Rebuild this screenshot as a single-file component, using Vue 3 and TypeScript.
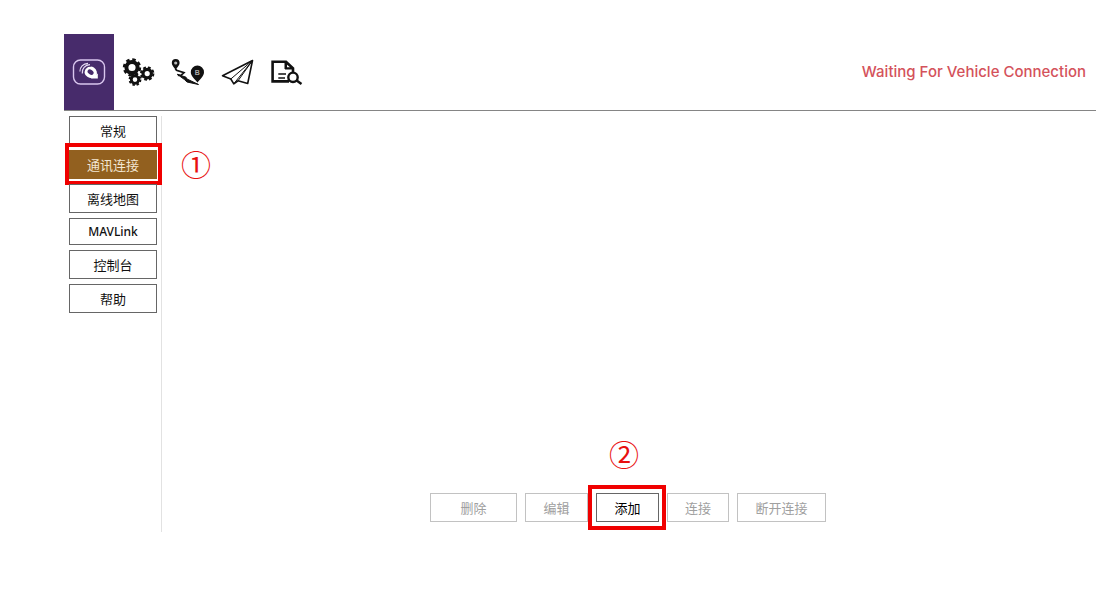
<script setup lang="ts">
import { ref } from 'vue'

interface SideItem {
  id: string
  label: string
}

interface LinkAction {
  id: string
  label: string
  enabled: boolean
}

const sideItems: SideItem[] = [
  { id: 'general', label: '常规' },
  { id: 'comm', label: '通讯连接' },
  { id: 'offline', label: '离线地图' },
  { id: 'mavlink', label: 'MAVLink' },
  { id: 'console', label: '控制台' },
  { id: 'help', label: '帮助' },
]

const actions: LinkAction[] = [
  { id: 'delete', label: '删除', enabled: false },
  { id: 'edit', label: '编辑', enabled: false },
  { id: 'add', label: '添加', enabled: true },
  { id: 'connect', label: '连接', enabled: false },
  { id: 'disconnect', label: '断开连接', enabled: false },
]

const current = ref('comm')
</script>

<template>
  <div class="page">
    <header class="toolbar">
      <nav class="tools">
        <button class="tool home" type="button" aria-label="Settings">
          <svg width="36" height="28" viewBox="0 0 36 28" fill="none">
            <rect x="2.5" y="2" width="31" height="24" rx="7" stroke="#d9c6ee" stroke-width="1.4" />
            <ellipse cx="19.6" cy="14.2" rx="5" ry="4" transform="rotate(35 19.6 14.2)" stroke="#fff" stroke-width="3.4" />
            <path d="M22 19 26.800 15.500V20.600H20Z" fill="#fff" />
            <path d="M12.800 17.500C11.800 11.500 15 8 20.500 8" stroke="#472b6b" stroke-width="1.200" />
            <path d="M11.300 15.500C10.800 10.500 14 6.900 19 6.700M8.900 13.500C8.900 9 12 5.600 17 5.400" stroke="#e6daf3" stroke-width="1.200" />
          </svg>
        </button>
        <button class="tool" type="button" aria-label="Vehicle setup">
          <svg width="37" height="30" viewBox="0 0 37 30" fill="none" stroke="#111">
            <circle cx="12" cy="10.5" r="5.6" stroke-width="4" />
            <circle cx="12" cy="10.5" r="8" stroke-width="2.400" stroke-dasharray="3.5 2.783" />
            <circle cx="27.2" cy="16.6" r="4.2" stroke-width="3.2" />
            <circle cx="27.2" cy="16.6" r="6.2" stroke-width="2" stroke-dasharray="2.8 2.069" />
            <circle cx="15" cy="22.6" r="3.7" stroke-width="2.8" />
            <circle cx="15" cy="22.6" r="5.4" stroke-width="2" stroke-dasharray="2.4 1.841" />
          </svg>
        </button>
        <button class="tool" type="button" aria-label="Plan">
          <svg width="37" height="30" viewBox="0 0 37 30" fill="none">
            <path d="M6.600 12.500C4.400 9.800 2.800 8.200 2.800 6a3.900 3.900 0 0 1 7.800 0C10.600 8.200 8.800 9.800 6.600 12.500Z" fill="#111" />
            <circle cx="6.700" cy="6" r="1.600" fill="#bbb" />
            <path d="M6.300 11.500 7.500 13.300 15 15.700 12.500 18 8.800 18.300" stroke="#111" stroke-width="1.700" />
            <path d="M8.300 17.300 17 20.200 18 22 29.500 27.500 18 25 15.500 22.600Z" fill="#111" stroke="#111" />
            <path d="M28.500 25.500C25.200 21.200 21.800 19 21.800 15.200a6.600 6.600 0 0 1 13.200 0C35 19 31.800 21.200 28.500 25.500Z" fill="#111" />
            <text class="pin-letter" x="28.400" y="18" text-anchor="middle" fill="#aaa">B</text>
          </svg>
        </button>
        <button class="tool" type="button" aria-label="Fly">
          <svg width="37" height="30" viewBox="0 0 37 30" fill="none" stroke="#111" stroke-linejoin="round">
            <path d="M34.500 3.500 4.500 18.700 12.800 22 15.800 26.800 20 23.800 29.700 26.500Z" stroke-width="1.600" />
            <path d="M34.500 3.500 12.800 22M34.500 3.500 16 26.500M34.500 3.500 20 23.800" stroke-width="1" />
          </svg>
        </button>
        <button class="tool" type="button" aria-label="Analyze">
          <svg width="37" height="30" viewBox="0 0 37 30" fill="none" stroke="#111">
            <path d="M22 24.400H5.600V4.800H19L26 11.300V16" stroke-width="2.600" />
            <path d="M18 4.500V12H26.500Z" fill="#111" stroke-width="1" />
            <path d="M20 7.800V10.300H23Z" fill="#fff" stroke="none" />
            <path d="M11.300 17H19M11.300 21H18" stroke-width="1.500" />
            <circle cx="26" cy="20.300" r="4.700" fill="#fff" stroke-width="2.400" />
            <path d="M29.300 23.300 34.500 27" stroke-width="2.400" />
          </svg>
        </button>
      </nav>
      <p class="status">Waiting For Vehicle Connection</p>
    </header>

    <div class="body">
      <nav class="side">
        <div v-for="item in sideItems" :key="item.id" class="slot">
          <button
            type="button"
            class="btn side-btn"
            :class="{ active: item.id === current, latin: item.id === 'mavlink' }"
            @click="current = item.id"
          >
            {{ item.label }}
          </button>
          <template v-if="item.id === 'comm'">
            <span class="frame side-frame"></span>
            <span class="step side-step">①</span>
          </template>
        </div>
      </nav>

      <main class="content">
        <div class="actions">
          <div v-for="a in actions" :key="a.id" class="slot">
            <button type="button" class="btn action" :class="a.id" :disabled="!a.enabled">{{ a.label }}</button>
            <template v-if="a.id === 'add'">
              <span class="frame add-frame"></span>
              <span class="step add-step">②</span>
            </template>
          </div>
        </div>
      </main>
    </div>
  </div>
</template>

<style>
body {
  margin: 0;
  background: #fff;
}
</style>

<style scoped>
.page {
  box-sizing: border-box;
  min-height: 100vh;
  padding: 34px 23px 63px 64px;
  display: flex;
  flex-direction: column;
  font-family: "Noto Sans", "Noto Sans CJK SC", sans-serif;
  color: #111;
}

.toolbar {
  display: flex;
  align-items: stretch;
  justify-content: space-between;
  border-bottom: 1px solid #858585;
}

.tools {
  display: flex;
}

.tool {
  width: 49px;
  height: 76px;
  padding: 0;
  border: 0;
  background: none;
  display: flex;
  align-items: center;
  justify-content: center;
}

.home {
  width: 50px;
  background: #472b6b;
}

.pin-letter {
  font: bold 7px "Liberation Sans", sans-serif;
  stroke: none;
}

.status {
  margin: 0;
  padding-right: 10px;
  align-self: center;
  font: 500 15px/20px Inter, sans-serif;
  color: #d4525b;
}

.body {
  flex: 1;
  display: flex;
  padding-top: 5px;
}

.side {
  box-sizing: border-box;
  width: 98px;
  padding: 0 4px 0 5px;
  border-right: 1px solid #e2e2e2;
  display: flex;
  flex-direction: column;
  gap: 5px;
}

.slot {
  position: relative;
  display: flex;
}

.btn {
  box-sizing: border-box;
  height: 29px;
  padding: 0;
  border: 1px solid #666;
  background: #fff;
  font-family: inherit;
  font-size: 13px;
  line-height: 18px;
  color: #111;
}

.side-btn {
  flex: 1;
}

.side-btn.latin {
  height: 27px;
  font-size: 12px;
  font-weight: 500;
}

.side-btn.active {
  background: #92601f;
  border-color: #92601f;
  color: #f3e6d2;
}

.frame {
  position: absolute;
  border: 4px solid #f00000;
  pointer-events: none;
}

.side-frame {
  inset: -7px -5px -6px -4px;
}

.add-frame {
  inset: -8px -7px -8px -8px;
}

.step {
  position: absolute;
  font: 30px/30px "Noto Sans CJK SC", sans-serif;
  color: #e81010;
}

.side-step {
  left: 112px;
  top: -2px;
}

.add-step {
  left: 13px;
  top: -55px;
}

.content {
  flex: 1;
  display: flex;
  flex-direction: column;
  justify-content: flex-end;
  padding: 0 2px 10px 0;
}

.actions {
  display: flex;
  justify-content: center;
  gap: 8px;
}

.action {
  width: 63px;
}

.action:disabled {
  border-color: #c2c2c2;
  color: #a0a0a0;
}

.add {
  color: #000;
}

.delete {
  width: 87px;
}

.connect {
  width: 62px;
}

.disconnect {
  width: 89px;
}
</style>
